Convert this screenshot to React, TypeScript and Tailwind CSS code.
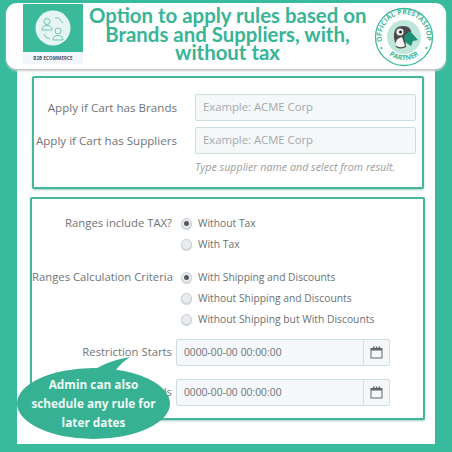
const sans = "font-['Open_Sans',sans-serif]";

function Radio({ checked }: { checked?: boolean }) {
  return (
    <span className="flex h-[11px] w-[11px] shrink-0 items-center justify-center rounded-full border border-[#c9ced3] bg-[#e9ecef] shadow-[0_1px_1px_#d5d8db]">
      {checked ? <span className="h-[5px] w-[5px] rounded-full bg-[#55595e]" /> : null}
    </span>
  );
}

function RadioRow({ label, text, checked, className }: { label?: string; text: string; checked?: boolean; className?: string }) {
  return (
    <div className={`flex h-[21px] items-center ${className ?? ""}`}>
      <div className="w-[140px] shrink-0 whitespace-nowrap text-right text-[11.3px] text-[#6f7477]">{label}</div>
      <div className="ml-[9px] flex items-center gap-[6px]">
        <Radio checked={checked} />
        <span className="whitespace-nowrap text-[10.3px] text-[#6c7073]">{text}</span>
      </div>
    </div>
  );
}

function TextRow({ label, placeholder, className }: { label: string; placeholder: string; className?: string }) {
  return (
    <div className={`flex items-center ${className ?? ""}`}>
      <div className="w-[143px] shrink-0 whitespace-nowrap text-right text-[11.6px] text-[#6f7477]">{label}</div>
      <div className="ml-[18px] flex h-[27px] w-[221px] items-center rounded-[2px] border border-[#c9dfe0] bg-[#f4f8f9] pl-[7px] text-[11.3px] text-[#a4a9ac]">
        {placeholder}
      </div>
    </div>
  );
}

function CalendarIcon() {
  return (
    <svg width="13" height="13" viewBox="0 0 13 13" fill="none">
      <rect x="1" y="2.5" width="11" height="9.5" stroke="#63676a" />
      <rect x="1" y="2" width="11" height="2.5" fill="#63676a" />
      <rect x="3" y="0.5" width="1.5" height="2.5" fill="#63676a" />
      <rect x="5.8" y="0.5" width="1.5" height="2.5" fill="#63676a" />
      <rect x="8.6" y="0.5" width="1.5" height="2.5" fill="#63676a" />
    </svg>
  );
}

function DateRow({ label, className }: { label: string; className?: string }) {
  return (
    <div className={`flex items-center ${className ?? ""}`}>
      <div className="w-[140px] shrink-0 whitespace-nowrap text-right text-[11.3px] text-[#6f7477]">{label}</div>
      <div className="ml-[4px] flex h-[27px] w-[214px] rounded-[2px] border border-[#cfdfe6] bg-[#f5f8fa]">
        <div className="flex flex-1 items-center pl-[7px] font-['Liberation_Sans',sans-serif] text-[10.5px] text-[#75797c]">
          0000-00-00 00:00:00
        </div>
        <div className="flex w-[26px] items-center justify-center border-l border-[#cfdfe6]">
          <CalendarIcon />
        </div>
      </div>
    </div>
  );
}

function LogoTile() {
  return (
    <div className="ml-[17px] mt-[1px] flex h-[60px] w-[60px] shrink-0 flex-col">
      <div className="flex flex-1 items-center justify-center bg-[#3bb99b]">
        <svg width="36" height="36" viewBox="0 0 36 36" fill="none">
          <circle cx="18" cy="18" r="17.5" fill="#e6f5f1" />
          <g stroke="#5fc2aa" strokeWidth="0.9">
            <circle cx="12" cy="11.5" r="3" />
            <path d="M7 20 q0-4.5 5-4.5 t5 4.5z" />
            <circle cx="23" cy="21" r="3" />
            <path d="M18 30 q0-4.5 5-4.5 t5 4.5z" />
            <path d="M20 8 q5-1 6 3 l2 2 M9 24 q1 4 6 5" />
          </g>
        </svg>
      </div>
      <div className="flex h-[12px] items-center justify-center bg-[#f2f5fa] text-[4.5px] font-bold tracking-[0.1px] text-[#4a4f55]">
        B2B ECOMMERCE
      </div>
    </div>
  );
}

function PartnerBadge() {
  return (
    <svg width="60" height="60" viewBox="0 0 60 60" className="shrink-0">
      <circle cx="30" cy="30" r="28.5" fill="#fff" stroke="#3bb99b" strokeWidth="1.3" />
      <circle cx="30" cy="30" r="17" fill="#bfe6db" />
      <defs>
        <path id="badgeTop" d="M8.5 36 A22.5 22.5 0 1 1 52 35" />
        <path id="badgeBottom" d="M7 36 A24 24 0 0 0 53 36" />
      </defs>
      <text fontSize="6.8" fontWeight="700" fill="#3bb99b" fontFamily="'Open Sans',sans-serif" letterSpacing="0.2">
        <textPath href="#badgeTop" startOffset="50%" textAnchor="middle">OFFICIAL PRESTASHOP</textPath>
      </text>
      <text fontSize="7" fontWeight="700" fill="#3bb99b" fontFamily="'Open Sans',sans-serif">
        <textPath href="#badgeBottom" startOffset="50%" textAnchor="middle">PARTNER</textPath>
      </text>
      <circle cx="7.5" cy="41" r="1.1" fill="#3bb99b" />
      <circle cx="52.5" cy="41" r="1.1" fill="#3bb99b" />
      <path d="M20 31 q-1-12 9-12 q9 0 8 8 l-6 4 l1 9 q-6 3-10 0z" fill="#4a4a4c" />
      <path d="M21 38 q1-7 7-8 l3 9 q-5 3-10-1z" fill="#f5f5f5" />
      <circle cx="26" cy="25" r="3.6" fill="#f1f1f1" />
      <circle cx="26.5" cy="25" r="1.5" fill="#222" />
      <path d="M36 24 l8 9 l-5 1 l-2 5 l-6-4 l-1-6z" fill="#1f8f78" />
    </svg>
  );
}

export default function App() {
  return (
    <div className={`${sans} relative h-[452px] w-[452px] overflow-hidden bg-[#37bb9c]`}>
      <div className="absolute left-[17px] top-[60px] h-[384px] w-[418px] bg-white" />
      <div className="relative pt-[3px]">
        <header className="mx-[6px] flex h-[66px] w-[440px] items-start rounded-[11px] bg-white shadow-[0_2px_2px_#c4c8c8]">
          <LogoTile />
          <h1 className="ml-[6px] mt-[3px] w-[277px] shrink-0 whitespace-nowrap text-center font-['Lato',sans-serif] text-[20.4px] font-bold leading-[18.5px] text-[#37b596]">
            Option to apply rules based on
            <br />
            Brands and Suppliers, with,
            <br />
            without tax
          </h1>
          <div className="ml-[8px] mt-[4px]">
            <PartnerBadge />
          </div>
        </header>

        <div className="ml-[32px] mt-[7px] h-[113px] w-[392px] rounded-[2px] border-2 border-[#45b79d] bg-white pt-[16px] shadow-[0_1px_2px_#9fcfc3]">
          <TextRow label="Apply if Cart has Brands" placeholder="Example: ACME Corp" />
          <TextRow label="Apply if Cart has Suppliers" placeholder="Example: ACME Corp" className="mt-[6px]" />
          <p className="ml-[161px] mt-[5px] whitespace-nowrap text-[10.7px] italic text-[#9a9ea1]">
            Type supplier name and select from result.
          </p>
        </div>

        <div className="ml-[30px] mt-[8px] h-[223px] w-[395px] rounded-[2px] border-2 border-[#45b79d] bg-white pt-[14px] shadow-[0_1px_2px_#9fcfc3]">
          <RadioRow label="Ranges include TAX?" text="Without Tax" checked />
          <RadioRow text="With Tax" />
          <RadioRow label="Ranges Calculation Criteria" text="With Shipping and Discounts" checked className="mt-[12px]" />
          <RadioRow text="Without Shipping and Discounts" />
          <RadioRow text="Without Shipping but With Discounts" />
          <DateRow label="Restriction Starts" className="mt-[9px]" />
          <DateRow label="Restriction Ends" className="mt-[13px]" />
        </div>
      </div>

      {/* speech bubble over the date rows */}
      <svg width="60" height="24" viewBox="0 0 60 24" className="absolute left-[80px] top-[356px]">
        <path d="M0 24 Q20 6 50 1 Q36 10 30 24z" fill="#37b193" />
      </svg>
      <div className="absolute left-[17px] top-[368px] flex h-[71px] w-[153px] items-center justify-center rounded-[50%] bg-[#37b193] text-center text-[11.8px] font-bold leading-[19px] text-[#eef9f6]">
        <span>
          Admin can also
          <br />
          schedule any rule for
          <br />
          later dates
        </span>
      </div>
    </div>
  );
}
